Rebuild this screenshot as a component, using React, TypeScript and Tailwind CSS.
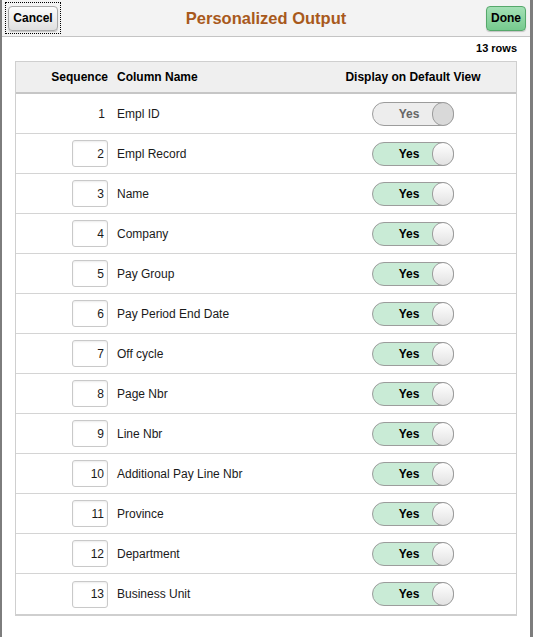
const rows = [
  'Empl ID',
  'Empl Record',
  'Name',
  'Company',
  'Pay Group',
  'Pay Period End Date',
  'Off cycle',
  'Page Nbr',
  'Line Nbr',
  'Additional Pay Line Nbr',
  'Province',
  'Department',
  'Business Unit',
];

function Toggle({ disabled }: { disabled?: boolean }) {
  return (
    <div
      className={`relative w-[82px] h-[24px] rounded-full border border-[#9c9c9c] flex items-center ${
        disabled ? 'bg-[#ededed]' : 'bg-[#c9ebd6]'
      }`}
    >
      <span
        className={`w-[72px] text-center text-[12px] font-bold ${disabled ? 'text-[#666]' : 'text-black'}`}
      >
        Yes
      </span>
      <span
        className={`absolute right-[-1px] top-[-1px] w-[22px] h-[24px] rounded-full border border-[#9c9c9c] ${
          disabled ? 'bg-[#d9d9d9]' : 'bg-gradient-to-b from-white to-[#e2e2e2]'
        }`}
      />
    </div>
  );
}

export default function App() {
  return (
    <div
      className="w-[533px] h-[637px] bg-white border-l-2 border-r-[3px] border-[#7d7d7d] flex flex-col"
      style={{ fontFamily: '"Liberation Sans", Arial, sans-serif' }}
    >
      <div className="h-[37px] shrink-0 bg-[#f3f3f3] border-b border-[#c4c4c4] grid grid-cols-[1fr_auto_1fr] items-center">
        <div className="pl-[3px]">
          <div className="inline-block border border-dotted border-black p-[2px]">
            <button className="w-[50px] h-[25px] rounded-[4px] border border-[#a9a9a9] bg-gradient-to-b from-[#fbfbfb] to-[#e0e0e0] text-[12px] font-bold text-black shadow-[0_1px_1px_rgba(0,0,0,0.2)]">
              Cancel
            </button>
          </div>
        </div>
        <div className="text-[16.5px] font-bold text-[#a8591c]">Personalized Output</div>
        <div className="flex justify-end pr-[4px]">
          <button className="w-[40px] h-[25px] rounded-[4px] border border-[#56a86b] bg-gradient-to-b from-[#a3e0b5] to-[#76ca8e] text-[12px] font-bold text-black shadow-[0_1px_1px_rgba(0,0,0,0.2)]">
            Done
          </button>
        </div>
      </div>

      <div className="px-[13px]">
        <div className="h-[24px] flex items-end justify-end pb-[5px] text-[11px] font-bold text-black">13 rows</div>

        <div className="border border-b-2 border-[#cfcfcf] text-[12px] text-[#1a1a1a]">
          <div className="h-[32px] bg-[#efefef] border-b-2 border-[#c6c6c6] grid grid-cols-[94px_1fr_206px] items-center font-bold text-black">
            <div className="text-right pr-[2px]">Sequence</div>
            <div className="pl-[7px]">Column Name</div>
            <div className="text-center">Display on Default View</div>
          </div>
          {rows.map((name, i) => (
            <div
              key={name}
              className={`h-[40px] grid grid-cols-[94px_1fr_206px] items-center ${
                i < rows.length - 1 ? 'border-b border-[#d4d4d4]' : ''
              }`}
            >
              <div className="flex justify-end pr-[2px]">
                {i === 0 ? (
                  <span className="pr-[3px]">1</span>
                ) : (
                  <div className="w-[36px] h-[27px] rounded-[3px] border border-[#c9c9c9] bg-white shadow-[inset_0_1px_2px_rgba(0,0,0,0.08)] flex items-center justify-end pr-[3px]">
                    {i + 1}
                  </div>
                )}
              </div>
              <div className="pl-[7px]">{name}</div>
              <div className="flex justify-center">
                <Toggle disabled={i === 0} />
              </div>
            </div>
          ))}
        </div>
      </div>
    </div>
  );
}
